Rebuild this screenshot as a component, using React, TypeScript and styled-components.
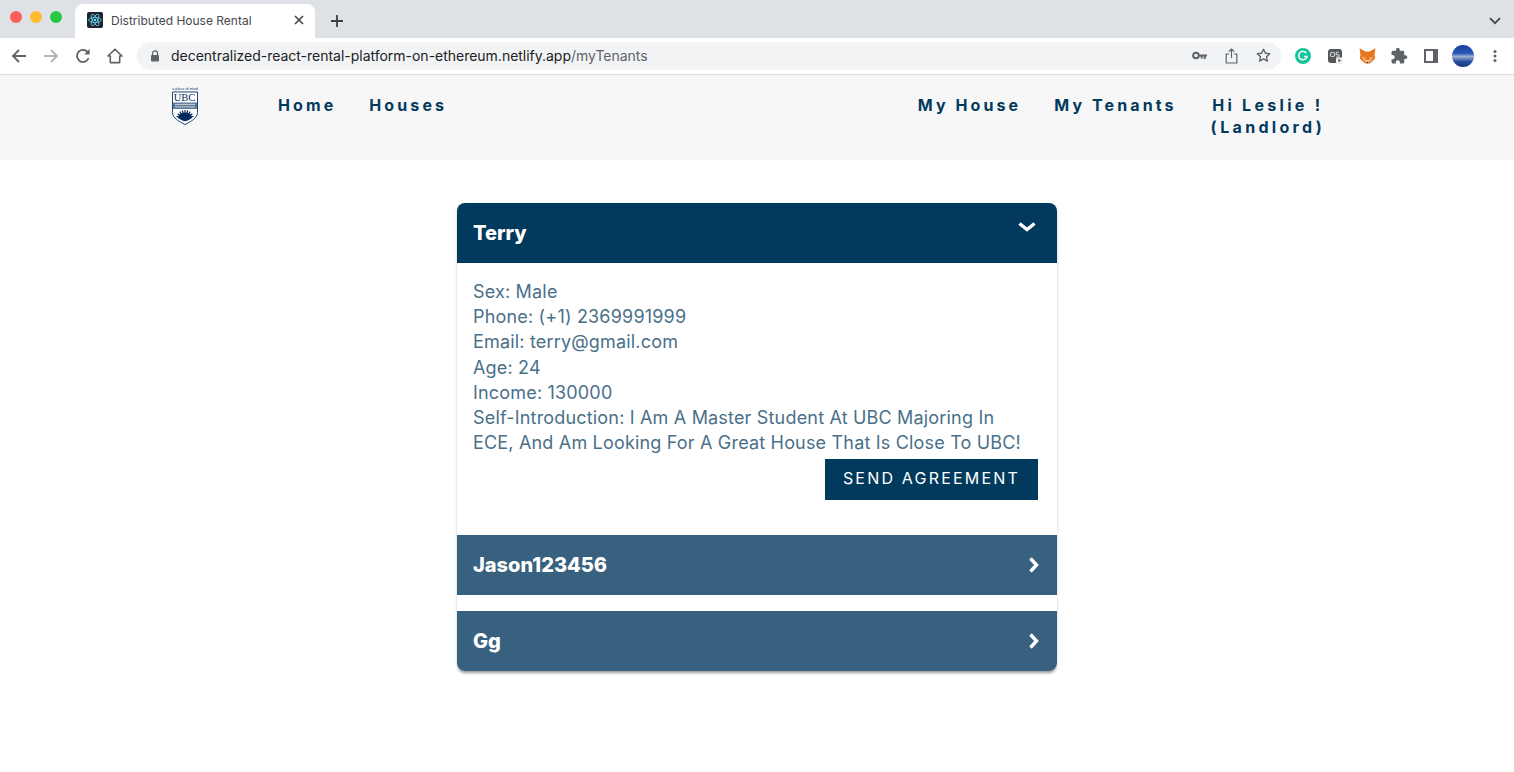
import React from 'react'
import styled, { createGlobalStyle } from 'styled-components'

const GlobalStyle = createGlobalStyle`
    html, body {
        margin: 0;
        padding: 0;
        background: #fff;
        font-family: "Inter", "Liberation Sans", sans-serif;
    }
`

const tenantLines = [
    'Sex: Male',
    'Phone: (+1) 2369991999',
    'Email: terry@gmail.com',
    'Age: 24',
    'Income: 130000',
]

const ChevronRight = () => (
    <svg width="12" height="16" viewBox="0 0 12 16">
        <path d="M2.500 1.500L8.500 8l-6 6.500" fill="none" stroke="#fff" strokeWidth="3.400" />
    </svg>
)

const sunRays = [-72, -54, -36, -18, 0, 18, 36, 54, 72]

const App = () => {
    return (
        <Page>
            <GlobalStyle />
            <TabStrip>
                <Lights>
                    <Light color="#ff5f57" />
                    <Light color="#febc2e" />
                    <Light color="#28c840" />
                </Lights>
                <Tab>
                    <Favicon viewBox="0 0 16 16">
                        <rect width="16" height="16" rx="2" fill="#20232a" />
                        <g fill="none" stroke="#61dafb" strokeWidth="0.8">
                            <ellipse cx="8" cy="8" rx="6.4" ry="2.5" />
                            <ellipse cx="8" cy="8" rx="6.4" ry="2.5" transform="rotate(60 8 8)" />
                            <ellipse cx="8" cy="8" rx="6.4" ry="2.5" transform="rotate(120 8 8)" />
                        </g>
                        <circle cx="8" cy="8" r="1.3" fill="#61dafb" />
                    </Favicon>
                    <TabTitle>Distributed House Rental</TabTitle>
                    <svg width="10" height="10" viewBox="0 0 10 10">
                        <path d="M1 1l8 8M9 1l-8 8" stroke="#45484d" strokeWidth="1.7" />
                    </svg>
                </Tab>
                <NewTab width="14" height="14" viewBox="0 0 14 14">
                    <path d="M7 1v12M1 7h12" stroke="#3c4043" strokeWidth="1.8" />
                </NewTab>
                <TabChevron width="12" height="8" viewBox="0 0 12 8">
                    <path d="M1 1.2l5 5 5-5" fill="none" stroke="#45484d" strokeWidth="1.7" />
                </TabChevron>
            </TabStrip>

            <Toolbar>
                <NavIcons>
                    <ToolIcon viewBox="0 0 16 16">
                        <path d="M15 8H2.5M8 2L2 8l6 6" fill="none" stroke="#5f6368" strokeWidth="1.8" />
                    </ToolIcon>
                    <ToolIcon viewBox="0 0 16 16">
                        <path d="M1 8h12.5M8 2l6 6-6 6" fill="none" stroke="#b1b3b6" strokeWidth="1.8" />
                    </ToolIcon>
                    <ToolIcon viewBox="0 0 16 16">
                        <path d="M13.6 10a6 6 0 1 1-.4-5" fill="none" stroke="#5f6368" strokeWidth="1.8" />
                        <path d="M14.6 1v5.4H9.2z" fill="#5f6368" />
                    </ToolIcon>
                    <ToolIcon viewBox="0 0 16 16">
                        <path d="M8 1.2L1 8h2.3v6.6h9.4V8H15z" fill="none" stroke="#5f6368" strokeWidth="1.6" strokeLinejoin="round" />
                    </ToolIcon>
                </NavIcons>
                <Omnibox>
                    <svg width="10" height="12" viewBox="0 0 10 12">
                        <path d="M2.5 5V3.4a2.5 2.5 0 0 1 5 0V5" fill="none" stroke="#5f6368" strokeWidth="1.2" />
                        <rect x="1" y="5" width="8" height="6.5" rx="1" fill="#5f6368" />
                    </svg>
                    <UrlText>
                        decentralized-react-rental-platform-on-ethereum.netlify.app<UrlPath>/myTenants</UrlPath>
                    </UrlText>
                    <OmniIcons>
                        <IconSlot>
                            <svg width="15" height="9" viewBox="0 0 15 9">
                                <circle cx="4" cy="4.5" r="2.8" fill="none" stroke="#5f6368" strokeWidth="2" />
                                <path d="M6.5 3.4H15v2.2h-1.3V8h-2V5.6h-1V7.5h-2V5.6H6.5z" fill="#5f6368" />
                            </svg>
                        </IconSlot>
                        <IconSlot>
                            <svg width="13" height="16" viewBox="0 0 13 16">
                                <path d="M4 6H1.2v9h10.6V6H9M6.5 10V1M3.8 3.6L6.5 1l2.7 2.6" fill="none" stroke="#5f6368" strokeWidth="1.2" />
                            </svg>
                        </IconSlot>
                        <IconSlot>
                            <svg width="15" height="15" viewBox="0 0 15 15">
                                <path d="M7.5 1.3l1.9 4 4.3.5-3.2 3 .9 4.3-3.9-2.2-3.9 2.2.9-4.3-3.2-3 4.3-.5z" fill="none" stroke="#5f6368" strokeWidth="1.4" strokeLinejoin="round" />
                            </svg>
                        </IconSlot>
                    </OmniIcons>
                </Omnibox>
                <Extensions>
                    <IconSlot>
                        <svg width="16" height="16" viewBox="0 0 16 16">
                            <circle cx="8" cy="8" r="8" fill="#15c39a" />
                            <path d="M11.4 5.2A4.2 4.2 0 1 0 12 8.6H8.8" fill="none" stroke="#fff" strokeWidth="1.5" />
                        </svg>
                    </IconSlot>
                    <IconSlot>
                        <svg width="15" height="16" viewBox="0 0 15 16">
                            <rect width="14" height="14" y="1" rx="3" fill="#55585b" />
                            <circle cx="4.5" cy="6.5" r="2.2" fill="none" stroke="#ccc" strokeWidth="1.1" />
                            <path d="M11 4.300H8.300v2.400H11v2.300H8" fill="none" stroke="#ccc" strokeWidth="1.1" />
                            <rect x="8" y="9.500" width="7" height="6.500" rx="1.500" fill="#f1f1f1" />
                            <path d="M10.400 10.800v3.400l2.800-1.700z" fill="#55585b" />
                        </svg>
                    </IconSlot>
                    <IconSlot>
                        <svg width="17" height="16" viewBox="0 0 17 16">
                            <path d="M0.500 0.300l6 3.200h4l6-3.200-1 7 .8 3-3.300 3.500-2.500 1.700h-4l-2.500-1.700L.700 10.300l.8-3z" fill="#e8751f" />
                            <path d="M2.500 8.500l4 .7 1 5.300-3-1.500zM14.500 8.500l-4 .7-1 5.300 3-1.500z" fill="#f6a45c" />
                            <path d="M6.500 12h4l-.8 3.300H7.300z" fill="#f3d9c0" />
                            <path d="M7.300 13.800h2.400l-.6 1.500H7.900z" fill="#3a2a20" />
                        </svg>
                    </IconSlot>
                    <IconSlot>
                        <svg width="18" height="18" viewBox="0 0 24 24">
                            <path d="M20.500 11H19V7c0-1.100-.9-2-2-2h-4V3.500C13 2.120 11.880 1 10.500 1S8 2.120 8 3.500V5H4c-1.100 0-1.990.9-1.990 2v3.800H3.500c1.490 0 2.700 1.210 2.700 2.700s-1.210 2.700-2.700 2.700H2V20c0 1.100.9 2 2 2h3.800v-1.500c0-1.490 1.210-2.700 2.700-2.700 1.490 0 2.700 1.210 2.700 2.700V22H17c1.100 0 2-.9 2-2v-4h1.500c1.380 0 2.500-1.120 2.500-2.500S21.880 11 20.500 11z" fill="#5f6368" />
                        </svg>
                    </IconSlot>
                    <IconSlot>
                        <svg width="14" height="14" viewBox="0 0 14 14">
                            <rect x="1" y="1" width="12" height="12" fill="none" stroke="#5f6368" strokeWidth="2" />
                            <rect x="9" y="1" width="4" height="12" fill="#5f6368" />
                        </svg>
                    </IconSlot>
                    <IconSlot>
                        <Avatar />
                    </IconSlot>
                    <IconSlot>
                        <svg width="4" height="14" viewBox="0 0 4 14">
                            <circle cx="2" cy="2.500" r="1.500" fill="#5f6368" />
                            <circle cx="2" cy="7" r="1.500" fill="#5f6368" />
                            <circle cx="2" cy="11.500" r="1.500" fill="#5f6368" />
                        </svg>
                    </IconSlot>
                </Extensions>
            </Toolbar>

            <Header>
                <LeftNav>
                    <svg width="28" height="39" viewBox="0 0 28 39">
                        <text x="14" y="3.500" textAnchor="middle" fontSize="3.800" fontFamily="Liberation Sans, sans-serif" fill="#23406a">a place of mind</text>
                        <path d="M1.500 6h25v20.500c0 5.500-6.500 9-12.500 12C8 35.500 1.500 32 1.500 26.500z" fill="#fff" stroke="#1d4672" strokeWidth="1" />
                        <text x="13.500" y="15.300" textAnchor="middle" fontSize="10.500" fontFamily="Liberation Serif, serif" fill="#002a5c">UBC</text>
                        <rect x="2" y="16.500" width="24" height="6.500" fill="#5d7a9b" />
                        <path d="M4 18.400h20M4 20.900h20" stroke="#e3e9f0" strokeWidth="0.800" />
                        <g stroke="#002a5c" strokeWidth="1.200">
                            {sunRays.map((angle) => (
                                <path key={angle} d="M14 33v-9" transform={`rotate(${angle} 14 33)`} />
                            ))}
                        </g>
                        <path d="M7 32a7 5.500 0 0 1 14 0c-2 1.500-4.500 2.500-7 3.300-2.500-.8-5-1.800-7-3.300z" fill="#002a5c" />
                    </svg>
                    <NavLinks>
                        <NavLink>Home</NavLink>
                        <NavLink>Houses</NavLink>
                    </NavLinks>
                </LeftNav>
                <RightNav>
                    <NavLink>My House</NavLink>
                    <NavLink>My Tenants</NavLink>
                    <Greeting>Hi Leslie !<br />(Landlord)</Greeting>
                </RightNav>
            </Header>

            <Accordion>
                <ActiveRow>
                    <RowTitle>Terry</RowTitle>
                    <DownIcon width="18" height="12" viewBox="0 0 18 12">
                        <path d="M1.500 2.500L9 8.500l7.500-6" fill="none" stroke="#fff" strokeWidth="3.400" />
                    </DownIcon>
                </ActiveRow>
                <Panel>
                    <PanelText>
                        {tenantLines.map((line) => <div key={line}>{line}</div>)}
                        <div>Self-Introduction: I Am A Master Student At UBC Majoring In ECE, And Am Looking For A Great House That Is Close To UBC!</div>
                    </PanelText>
                    <ButtonRow>
                        <SendButton>SEND AGREEMENT</SendButton>
                    </ButtonRow>
                </Panel>
                <ClosedRow>
                    <RowTitle>Jason123456</RowTitle>
                    <ChevronRight />
                </ClosedRow>
                <Gap />
                <ClosedRow last>
                    <RowTitle>Gg</RowTitle>
                    <ChevronRight />
                </ClosedRow>
            </Accordion>
        </Page>
    )
}

export default App

const Page = styled.div`
    min-height: 772px;
    display: flex;
    flex-direction: column;
    overflow: hidden;
`

const TabStrip = styled.div`
    height: 38px;
    background: #dee1e6;
    display: flex;
    align-items: flex-end;
`

const Lights = styled.div`
    width: 75px;
    height: 34px;
    box-sizing: border-box;
    padding: 0 0 0 10px;
    display: flex;
    gap: 8px;
    margin-bottom: 4px;
    align-items: center;
    margin-top: -4px;
`

const Light = styled.span<{ color: string }>`
    width: 12px;
    height: 12px;
    border-radius: 50%;
    background: ${(props) => props.color};
`

const Tab = styled.div`
    width: 240px;
    height: 34px;
    box-sizing: border-box;
    padding: 0 11px 2px 12px;
    background: #fff;
    border-radius: 8px 8px 0 0;
    display: flex;
    align-items: center;
`

const Favicon = styled.svg`
    width: 16px;
    height: 16px;
    margin-right: 8px;
    flex: none;
`

const TabTitle = styled.span`
    flex: 1;
    font-family: "Inter", sans-serif;
    font-size: 12px;
    color: #45484d;
    white-space: nowrap;
`

const NewTab = styled.svg`
    margin: 0 0 10px 15px;
`

const TabChevron = styled.svg`
    margin: 0 13px 13px auto;
`

const Toolbar = styled.div`
    height: 37px;
    box-sizing: border-box;
    background: #fff;
    border-bottom: 1px solid #dadce0;
    display: flex;
    align-items: center;
    padding-bottom: 1px;
`

const NavIcons = styled.div`
    display: flex;
    gap: 16px;
    padding-left: 11px;
    width: 137px;
    box-sizing: border-box;
`

const ToolIcon = styled.svg`
    width: 16px;
    height: 16px;
`

const Omnibox = styled.div`
    width: 1144px;
    height: 28px;
    box-sizing: border-box;
    border-radius: 14px;
    background: #f1f3f4;
    display: flex;
    align-items: center;
    padding: 0 2px 0 13px;
`

const UrlText = styled.span`
    margin-left: 11px;
    font-family: "Inter", sans-serif;
    font-size: 14px;
    letter-spacing: -0.015px;
    color: #202124;
    white-space: nowrap;
`

const UrlPath = styled.span`
    color: #5f6368;
`

const OmniIcons = styled.div`
    margin-left: auto;
    display: flex;
    align-items: center;
`

const IconSlot = styled.span`
    width: 32px;
    height: 24px;
    flex: none;
    display: flex;
    align-items: center;
    justify-content: center;
`

const Extensions = styled.div`
    flex: 1;
    display: flex;
    align-items: center;
    padding-left: 6px;
`

const Avatar = styled.span`
    width: 22px;
    height: 22px;
    border-radius: 50%;
    background: linear-gradient(180deg, #17409c 0%, #2a56b8 38%, #9fb1d2 52%, #6f87bb 62%, #2a4f9e 75%, #17357f 100%);
`

const Header = styled.header`
    height: 85px;
    box-sizing: border-box;
    background: #f7f7f7;
    display: flex;
    justify-content: space-between;
    padding: 11px 189px 0 171px;
`

const LeftNav = styled.div`
    display: flex;
    align-items: flex-start;
`

const NavLinks = styled.div`
    display: flex;
    gap: 33px;
    margin-left: 79px;
    padding-top: 8px;
`

const NavLink = styled.span`
    font-family: "Inter", sans-serif;
    font-weight: 700;
    font-size: 16px;
    line-height: 22px;
    letter-spacing: 3.1px;
    color: #023a5e;
    white-space: nowrap;
`

const RightNav = styled.div`
    display: flex;
    align-items: flex-start;
    gap: 33px;
    padding-top: 8px;
`

const Greeting = styled(NavLink)`
    text-align: center;
    margin-left: 1px;
    letter-spacing: 3.3px;
`

const Accordion = styled.div`
    width: 600px;
    margin: 43px auto 0;
    border-radius: 8px;
    box-shadow: 0 3px 3px -1px rgba(0, 0, 0, 0.4), 0 0 4px rgba(0, 0, 0, 0.06);
    background: #fff;
`

const Row = styled.div`
    height: 60px;
    box-sizing: border-box;
    display: flex;
    align-items: center;
    justify-content: space-between;
    padding: 0 17px 0 16px;
    color: #fff;
`

const ActiveRow = styled(Row)`
    background: #023a5e;
    border-radius: 8px 8px 0 0;
`

const ClosedRow = styled(Row)<{ last?: boolean }>`
    background: #37617f;
    border-radius: ${(props) => (props.last ? '0 0 8px 8px' : '0')};
`

const DownIcon = styled.svg`
    margin: 0 4px 12px 0;
`

const RowTitle = styled.span`
    font-family: "Inter", sans-serif;
    font-weight: 800;
    font-size: 20px;
`

const Panel = styled.div`
    height: 272px;
    box-sizing: border-box;
    padding: 16px 16px 0;
`

const PanelText = styled.div`
    max-width: 560px;
    font-family: "Inter", sans-serif;
    font-size: 18px;
    line-height: 25.2px;
    letter-spacing: 0.18px;
    color: #4a7089;
`

const ButtonRow = styled.div`
    display: flex;
    justify-content: flex-end;
    padding: 4px 3px 0 0;
`

const SendButton = styled.button`
    width: 213px;
    height: 41px;
    padding: 0 0 3px;
    border: none;
    border-radius: 0;
    background: #023a5e;
    color: #fff;
    font-family: "Inter", sans-serif;
    font-size: 16px;
    letter-spacing: 2.2px;
`

const Gap = styled.div`
    height: 16px;
`
